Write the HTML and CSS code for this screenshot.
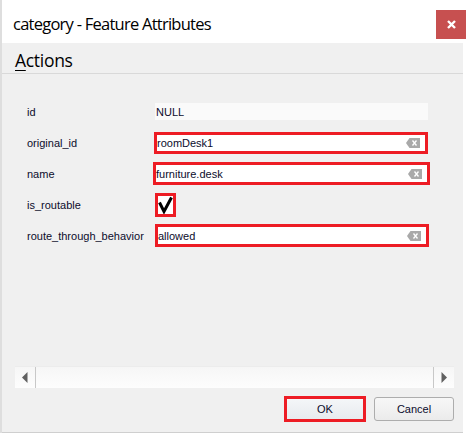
FILE: index.html
```html
<!DOCTYPE html>
<html>
<head>
<meta charset="utf-8">
<link rel="stylesheet" href="styles.css">
</head>
<body>
<div class="window">
  <div class="titlebar">
    <span class="title">category - Feature Attributes</span>
    <div class="close">
      <svg width="9" height="9" viewBox="0 0 9 9"><path d="M1 1 L8 8 M8 1 L1 8" stroke="#fff" stroke-width="2.4" fill="none"/></svg>
    </div>
  </div>
  <div class="menubar"><span class="menu"><u>A</u>ctions</span></div>
  <div class="content">
    <div class="form">
      <div class="row">
        <span class="label">id</span>
        <div class="null-field">NULL</div>
      </div>
      <div class="row">
        <span class="label">original_id</span>
        <div class="field f-orig"><span class="val">roomDesk1</span>
          <svg class="clear" width="14" height="10" viewBox="0 0 14 10"><path d="M3.5 0 H14 V10 H3.5 L0 5 Z" fill="#a9a9a9"/><path d="M6.5 2.5 L10.5 7.5 M10.5 2.5 L6.5 7.5" stroke="#fff" stroke-width="1.3"/></svg>
        </div>
      </div>
      <div class="row">
        <span class="label">name</span>
        <div class="field f-name"><span class="val">furniture.desk</span>
          <svg class="clear" width="14" height="10" viewBox="0 0 14 10"><path d="M3.5 0 H14 V10 H3.5 L0 5 Z" fill="#a9a9a9"/><path d="M6.5 2.5 L10.5 7.5 M10.5 2.5 L6.5 7.5" stroke="#fff" stroke-width="1.3"/></svg>
        </div>
      </div>
      <div class="row">
        <span class="label">is_routable</span>
        <div class="check">
          <svg width="15" height="18" viewBox="0 0 15 18"><path d="M1.5 6.5 L6 15.5 L13.5 1.5" stroke="#000" stroke-width="3" fill="none" stroke-linejoin="miter"/></svg>
        </div>
      </div>
      <div class="row">
        <span class="label">route_through_behavior</span>
        <div class="field f-route"><span class="val">allowed</span>
          <svg class="clear" width="14" height="10" viewBox="0 0 14 10"><path d="M3.5 0 H14 V10 H3.5 L0 5 Z" fill="#a9a9a9"/><path d="M6.5 2.5 L10.5 7.5 M10.5 2.5 L6.5 7.5" stroke="#fff" stroke-width="1.3"/></svg>
        </div>
      </div>
    </div>
    <div class="spacer"></div>
    <div class="hscroll">
      <div class="sbtn left"><svg width="6" height="11" viewBox="0 0 6 11"><path d="M5.5 0 V11 L0 5.5 Z" fill="#606060"/></svg></div>
      <div class="track"></div>
      <div class="sbtn right"><svg width="6" height="11" viewBox="0 0 6 11"><path d="M0.5 0 V11 L6 5.5 Z" fill="#606060"/></svg></div>
    </div>
    <div class="buttons">
      <div class="btn ok">OK</div>
      <div class="btn cancel">Cancel</div>
    </div>
  </div>
</div>
</body>
</html>
```

FILE: styles.css
```css
html, body {
  margin: 0;
  padding: 0;
  background: #ffffff;
}

.window {
  width: 465px;
  height: 433px;
  border-left: 2px solid #dedede;
  display: flex;
  flex-direction: column;
}

.titlebar {
  height: 43px;
  background: #ffffff;
  display: flex;
  align-items: flex-start;
  justify-content: space-between;
}

.title {
  font-family: "Open Sans", "Noto Sans", sans-serif;
  font-size: 16.5px;
  letter-spacing: -0.75px;
  color: #000;
  margin-left: 11px;
  margin-top: 12px;
  line-height: 24px;
}

.close {
  width: 30px;
  height: 29px;
  margin-top: 10px;
  margin-right: 1px;
  background: #c75050;
  display: flex;
  align-items: center;
  justify-content: center;
}

.menubar {
  height: 30px;
  margin-right: 4px;
  background: #f0f0f0;
  border-bottom: 1px solid #d9d9d9;
  display: flex;
  align-items: center;
}

.menu {
  font-family: "Open Sans", "Noto Sans", sans-serif;
  font-size: 17.5px;
  letter-spacing: -0.3px;
  color: #000;
  margin-left: 13px;
  margin-top: 4px;
  line-height: 24px;
}

.menu u {
  text-decoration-thickness: 1px;
  text-underline-offset: 3px;
}

.content {
  flex: 1;
  margin-right: 4px;
  background: #f0f0f0;
  border-bottom: 1px solid #cfcfcf;
  display: flex;
  flex-direction: column;
  font-family: "Liberation Sans", Arial, sans-serif;
  font-size: 11px;
  color: #0c0c2c;
}

.form {
  padding-top: 22px;
  padding-left: 25px;
}

.row {
  height: 31px;
  display: flex;
  align-items: center;
}

.label {
  width: 128px;
  flex: none;
}

.null-field {
  width: 272px;
  height: 17px;
  background: #fafafa;
  padding-left: 1px;
  display: flex;
  align-items: center;
}

.field {
  height: 16px;
  border: 3px solid #ed1c24;
  background: #ffffff;
  display: flex;
  align-items: center;
}

.f-orig {
  margin-left: -1px;
  width: 268px;
}

.f-name {
  margin-left: -2px;
  width: 271px;
  height: 17px;
}

.f-route {
  width: 268px;
  height: 17px;
}

.val {
  flex: 1;
  padding-left: 0px;
}

.clear {
  margin-right: 5px;
}

.check {
  width: 15px;
  height: 18px;
  border: 3px solid #ed1c24;
  background: #ffffff;
  display: flex;
}

.spacer {
  flex: 1;
}

.hscroll {
  margin-left: 13px;
  margin-right: 9px;
  height: 21px;
  display: flex;
  background: linear-gradient(#f6f6f6, #fdfdfd);
  border-top: 1px solid #ececec;
}

.sbtn {
  width: 20px;
  display: flex;
  align-items: center;
  justify-content: center;
}

.sbtn.left {
  border-right: 1px solid #c8c8c8;
}

.sbtn.right {
  border-left: 1px solid #c8c8c8;
}

.track {
  flex: 1;
}

.buttons {
  margin-top: 8px;
  margin-right: 9px;
  margin-bottom: 10px;
  height: 26px;
  display: flex;
  justify-content: flex-end;
  align-items: center;
  gap: 8px;
}

.btn {
  display: flex;
  align-items: center;
  justify-content: center;
  color: #0c0c2c;
  font-size: 11px;
}

.ok {
  width: 76px;
  height: 20px;
  border: 3px solid #ed1c24;
  background: linear-gradient(#f4f6f8, #e7ebef);
}

.cancel {
  width: 78px;
  height: 22px;
  border: 1px solid #adadad;
  border-radius: 3px;
  background: linear-gradient(#f7f7f7, #ebebeb);
}
```
